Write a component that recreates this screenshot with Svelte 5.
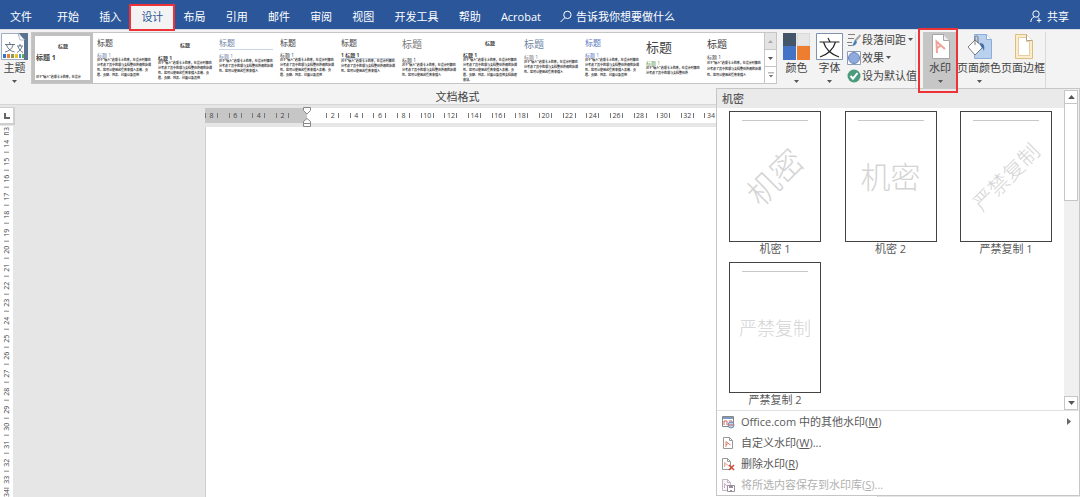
<script>
	const tabs = ['开始', '插入', '设计', '布局', '引用', '邮件', '审阅', '视图', '开发工具', '帮助', 'Acrobat'];

	let activeTab = $state('设计');
	let activeStyle = $state(0);
	let query = $state('');

	const sample =
		'对于“输入”选项卡上的库，在设计时都充分考虑了其中的项与文档整体外观的协调性。您可以使用这些库来插入表格、页眉、页脚、列表、封面以及其他文档构建基块。';

	// length: how many characters of the sample fit in the preview
	const styleSets = [
		{ title: 'small center', heading: 'large', body: 'last', prefix: '', length: 16 },
		{ title: 'medium', heading: 'slate', body: '', prefix: '', length: 68 },
		{ title: 'small center', heading: 'strong', body: '', prefix: '', length: 68 },
		{ title: 'medium slate ruled', heading: 'slate', body: '', prefix: '', length: 50 },
		{ title: 'medium', heading: '', body: '', prefix: '', length: 68 },
		{ title: 'medium', heading: 'strong ruled', body: '', prefix: '1 ', length: 50 },
		{ title: 'big gray', heading: 'low', body: '', prefix: '', length: 50 },
		{ title: 'small center', heading: 'strong', body: '', prefix: '', length: 75 },
		{ title: 'big slate', heading: 'gray', body: '', prefix: '', length: 50 },
		{ title: 'medium blue', heading: 'blue', body: '', prefix: '', length: 68 },
		{ title: 'huge', heading: 'green', body: '', prefix: '', length: 33 },
		{ title: 'big', heading: '', body: 'loose', prefix: '', length: 50 }
	];

	const watermarks = [
		{ text: '机密', label: '机密 1', kind: 'diagonal short' },
		{ text: '机密', label: '机密 2', kind: 'short' },
		{ text: '严禁复制', label: '严禁复制 1', kind: 'diagonal' },
		{ text: '严禁复制', label: '严禁复制 2', kind: '' }
	];

	const rulerLeft = [8, 6, 4, 2];
	const rulerRight = Array.from({ length: 23 }, (_, i) => (i + 1) * 2);
	const rulerRows = Array.from({ length: 20 }, (_, i) => i + 14);
</script>

{#snippet caret()}
	<svg class="caret" viewBox="0 0 5 3" aria-hidden="true"><path d="M0 0h5L2.5 3z" /></svg>
{/snippet}

<div class="app">
	<header class="tabs">
		<button class="tab file">文件</button>
		<nav>
			{#each tabs as tab}
				<button class="tab" class:active={activeTab === tab} onclick={() => (activeTab = tab)}>{tab}</button>
			{/each}
		</nav>
		<label class="tell-me">
			<svg viewBox="0 0 12 12" aria-hidden="true"><circle cx="7.4" cy="4.4" r="3.7" /><path d="M4.8 7.2L.6 11.5" /></svg>
			<input type="text" bind:value={query} placeholder="告诉我你想要做什么" aria-label="告诉我你想要做什么" />
		</label>
		<button class="share">
			<svg viewBox="0 0 12 13" aria-hidden="true"><circle cx="6" cy="4" r="3.2" /><path d="M4.2 6.8C2 7.8 1 9.5.8 12M7.6 7l1 .8M9 8v4.6M6.8 10.4h4.6" /></svg>
			共享
		</button>
	</header>

	<section class="ribbon">
		<div class="group design">
			<div class="controls">
				<button class="tool theme">
					<svg class="icon" viewBox="0 0 27 27" aria-hidden="true">
						<path fill="#fff" stroke="#9eaec0" d="M.5.5h26v26H.5z" />
						<path fill="#5b7290" d="M18 0h9v27h-4V7z" />
						<path fill="#fff" stroke="#8093ab" stroke-width=".6" d="M17 .5l7 6.500h-5z" />
						<path fill="none" stroke="#44546a" stroke-width=".8" d="M4 11.500h10M8.500 9l.7 2.500M5.500 12c1.500 4 4 6 8 7M12 12c-1 4-4 6-8 7M16 13h6M19 11v2M17 13.500c1 3 3 5 5 6M21 13.500c-1 3-3 5-5 6" />
						<path fill="#2e75d0" d="M2 21h3v4H2z" /><path fill="#ed7d31" d="M6 21h3v4H6z" />
						<path fill="#8a9a5b" d="M10 21h3v4h-3z" /><path fill="#f5bd1f" d="M14 21h3v4h-3z" />
						<path fill="#3c9bd0" d="M18 21h2v4h-2z" /><path fill="#62aa4b" d="M21 21h2v4h-2z" />
					</svg>
					<span>主题</span>
					{@render caret()}
				</button>

				<div class="gallery">
					{#each styleSets as set, i}
						<button class="style-set" class:selected={activeStyle === i} onclick={() => (activeStyle = i)}>
							<span class="set-title {set.title}">标题</span>
							<span class="set-heading {set.heading}">{set.prefix}标题 1</span>
							<span class="set-body {set.body}">{sample.slice(0, set.length)}</span>
						</button>
					{/each}
					<div class="gallery-nav">
						<button disabled aria-label="上一行"><svg class="caret" viewBox="0 0 5 3"><path d="M0 3h5L2.500 0z" /></svg></button>
						<button aria-label="下一行">{@render caret()}</button>
						<button aria-label="其他"><svg class="more" viewBox="0 0 7 6"><path d="M0 0h7v1H0zM1 3h5L3.500 6z" /></svg></button>
					</div>
				</div>

				<button class="tool">
					<svg class="icon" viewBox="0 0 27 27" aria-hidden="true">
						<path fill="#44546a" d="M0 0h13v13H0z" /><path fill="#e7e6e6" stroke="#c8c8c8" stroke-width=".6" d="M14 .3h12.700V13H14z" />
						<path fill="#4472c4" d="M0 13h13v14H0z" /><path fill="#ed7d31" d="M14 13h13v14H14z" />
					</svg>
					<span>颜色</span>
					{@render caret()}
				</button>
				<button class="tool">
					<svg class="icon" viewBox="0 0 27 27" aria-hidden="true">
						<path fill="#fff" stroke="#7f93ad" d="M.5.5h26v26H.5z" />
						<path fill="none" stroke="#262626" stroke-width="1.200" d="M3.500 9h20M12 5l2 4M7.500 9c2 7 7 12 15.500 15M19.500 9c-2 7-7 12-15.500 15" />
					</svg>
					<span>字体</span>
					{@render caret()}
				</button>

				<div class="stack">
					<button class="small">
						<svg class="glyph" viewBox="0 0 14 14" aria-hidden="true">
							<path fill="none" stroke="#808080" d="M1 1.500h7M1 5.500h6M0 9.500h5M1 12.500h4" />
							<path stroke="#a5a5a5" stroke-width="2" d="M13.500 2L8 8" /><path fill="#4a7ebb" d="M8.500 7l1.500 2c-1 3-3 4-5.500 4 2-1 1.500-4 4-6z" />
						</svg>
						段落间距{@render caret()}
					</button>
					<button class="small">
						<svg class="glyph" viewBox="0 0 14 14" aria-hidden="true">
							<path fill="#fff" stroke="#8c9db5" d="M.5.5h13v13H.5z" /><circle cx="7" cy="7" r="5.500" fill="#8faadc" stroke="#6e85bd" />
						</svg>
						效果{@render caret()}
					</button>
					<button class="small">
						<svg class="glyph" viewBox="0 0 14 14" aria-hidden="true">
							<circle cx="7" cy="7" r="6.500" fill="#4b9b7d" /><path fill="none" stroke="#fff" stroke-width="2" d="M3.500 7l2.500 2.700L10.500 4" />
						</svg>
						设为默认值
					</button>
				</div>
			</div>
			<div class="group-name">文档格式</div>
		</div>

		<div class="group background">
			<button class="tool pressed">
				<svg class="icon" viewBox="0 0 27 27" aria-hidden="true">
					<path fill="#fff" stroke="#a6a6a6" d="M5.500 1.500h11l6 6v18h-17z" /><path fill="#eee" stroke="#a6a6a6" d="M16.500 1.500v6h6" />
					<path fill="none" stroke="#eea397" stroke-width="2" d="M10 20L9.500 8.500 18 16M9.800 15.500l4-3" />
				</svg>
				<span>水印</span>
				{@render caret()}
			</button>
			<button class="tool wide">
				<svg class="icon" viewBox="0 0 27 27" aria-hidden="true">
					<path fill="#b9d1ec" stroke="#8caed4" d="M8.500 1.500h12l5 5v19h-17z" /><path fill="#fff" stroke="#8caed4" d="M20.500 1.500v5h5" />
					<path fill="#fff" stroke="#606060" stroke-width=".8" d="M9 7l8 7-8 8-7-8z" /><path fill="none" stroke="#606060" stroke-width=".8" d="M9 12V4.500c0-2 3-2 3 0V10" />
					<path fill="#3e6eae" d="M14 10c4 0 5 3 4 8-1-2-1-3-3-4z" />
				</svg>
				<span>页面颜色</span>
				{@render caret()}
			</button>
			<button class="tool wide">
				<svg class="icon" viewBox="0 0 27 27" aria-hidden="true">
					<path fill="#fbeccb" stroke="#dcbd82" d="M5.500 1.500h11l6 6v18h-17z" /><path fill="#fff" stroke="#dcbd82" stroke-width=".7" d="M8.500 4.500h8v4h3v14h-11z" />
					<path fill="#fff" stroke="#b0a58e" d="M16.500 1.500v6h6" />
				</svg>
				<span>页面边框</span>
			</button>
		</div>
	</section>

	<main class="workspace">
		<div class="side">
			<button class="tab-stop" aria-label="制表符"><svg viewBox="0 0 6 6"><path d="M1 0v5h5" /></svg></button>
			<div class="v-ruler">
				<span class="edge first">13</span>
				{#each rulerRows as n}
					<span class="mark">{n}</span>
				{/each}
				<span class="edge">34</span>
			</div>
		</div>
		<div class="document">
			<div class="h-ruler">
				{#each rulerLeft as n}
					<span class="mark margin"><b>{n}</b></span>
				{/each}
				<span class="mark origin">
					<svg viewBox="0 0 8 20" aria-hidden="true"><path d="M.5.500h7v3L4 7 .5 3.500zM.5 19.500v-5L4 11.500l3.500 3v5zM.5 16.500h7" /></svg>
				</span>
				{#each rulerRight as n}
					<span class="mark"><b>{n}</b></span>
				{/each}
			</div>
			<div class="page"></div>
		</div>
	</main>

	<div class="menu">
		<div class="scroll-area">
			<div class="content">
				<h2>机密</h2>
				<div class="watermarks">
					{#each watermarks as mark}
						<button class="watermark">
							<span class="sheet"><span class="mark-text {mark.kind}">{mark.text}</span></span>
							<span>{mark.label}</span>
						</button>
					{/each}
				</div>
			</div>
			<div class="scrollbar">
				<button aria-label="向上滚动"><svg class="caret" viewBox="0 0 5 3"><path d="M0 3h5L2.500 0z" /></svg></button>
				<div class="thumb"></div>
				<button class="down" aria-label="向下滚动">{@render caret()}</button>
			</div>
		</div>
		<div class="commands">
			<button class="command">
				<svg class="glyph" viewBox="0 0 14 14" aria-hidden="true">
					<path fill="#fff" stroke="#888" d="M1.500 1.500h11v10h-11z" /><path fill="#7b9cc0" d="M2 2h10v2H2z" />
					<path fill="none" stroke="#d7655a" d="M3 10V6h3v4M8 6h3v4" /><circle cx="10" cy="10" r="3" fill="#b9d1ec" stroke="#6f91b8" /><path fill="none" stroke="#d7655a" d="M7 10h6" />
				</svg>
				<span>Office.com 中的其他水印(<u>M</u>)</span>
				<svg class="submenu" viewBox="0 0 4 7" aria-hidden="true"><path d="M0 0l4 3.500L0 7z" /></svg>
			</button>
			<button class="command">
				<svg class="glyph" viewBox="0 0 14 14" aria-hidden="true">
					<path fill="#fff" stroke="#999" d="M2.500 1.500h6l3 3v8h-9z" /><path fill="none" stroke="#999" d="M8.500 1.500v3h3" /><path fill="none" stroke="#e2796e" d="M5 11V5.500L9.500 9M5 9l2-1.500" />
				</svg>
				<span>自定义水印(<u>W</u>)...</span>
			</button>
			<button class="command">
				<svg class="glyph" viewBox="0 0 14 14" aria-hidden="true">
					<path fill="#fff" stroke="#999" d="M1.500 1.500h5l3 3v8h-8z" /><path fill="none" stroke="#999" d="M6.500 1.500v3h3" /><path fill="none" stroke="#e9a8a0" d="M3.500 10V5.500L8 9M3.500 8.500l2-1" />
					<path stroke="#d04a35" stroke-width="1.500" d="M8 8l5 5M13 8l-5 5" />
				</svg>
				<span>删除水印(<u>R</u>)</span>
			</button>
			<button class="command" disabled>
				<svg class="glyph" viewBox="0 0 14 14" aria-hidden="true">
					<path fill="#faf5fa" stroke="#c3b5c3" d="M1.500 1.500h5l3 3v8h-8z" /><path fill="none" stroke="#c3b5c3" d="M6.500 1.500v3h3M3.500 10V5.500L7 9" />
					<path fill="#fff" stroke="#998f9d" d="M6.500 7.500h7v6h-7z" /><path fill="#998f9d" d="M8 8h4v2H8zM9 12h2v2H9z" />
				</svg>
				<span>将所选内容保存到水印库(<u>S</u>)...</span>
			</button>
		</div>
	</div>
</div>

<style>
	:global(body) {
		margin: 0;
	}

	.app {
		position: relative;
		display: flex;
		flex-direction: column;
		min-height: 100vh;
		overflow: hidden;
		background: #e6e6e6;
		color: #444;
		font-family: 'Open Sans', 'Noto Sans CJK SC', sans-serif;
		font-size: 11px;
		line-height: 14px;
	}

	.app * {
		box-sizing: border-box;
	}

	button {
		padding: 0;
		border: 0;
		background: none;
		color: inherit;
		font: inherit;
		white-space: nowrap;
	}

	svg {
		display: block;
		flex-shrink: 0;
	}

	.caret {
		width: 5px;
		height: 3px;
		fill: #555;
	}

	/* Tab bar */
	.tabs {
		display: flex;
		height: 29px;
		padding-right: 11px;
		background: #2b579a;
		color: #fff;
	}

	.tabs nav {
		display: flex;
		flex: 0 1 504px;
		justify-content: space-between;
	}

	.tab {
		position: relative;
		padding: 4px 10px 0;
	}

	.file {
		width: 47px;
		padding-right: 16px;
	}

	.tab.active {
		margin-top: 4px;
		padding-top: 0;
		background: #f3f3f3;
		color: #2b579a;
	}

	.tab.active::after,
	.tool.pressed::after {
		position: absolute;
		z-index: 3;
		inset: 0 -2px -2px;
		border: 2px solid #ee3338;
		content: '';
	}

	.tell-me {
		display: flex;
		flex: 1;
		align-items: center;
		gap: 4px;
		padding: 4px 0 0 9px;
	}

	.tell-me svg,
	.share svg {
		width: 12px;
		height: 13px;
		fill: none;
		stroke: #fff;
	}

	.tell-me input {
		width: 160px;
		padding: 0;
		border: 0;
		outline: none;
		background: none;
		color: #fff;
		font: inherit;
	}

	.tell-me input::placeholder {
		color: #fff;
		opacity: 1;
	}

	.share {
		display: flex;
		align-items: center;
		gap: 5px;
		padding-top: 4px;
	}

	/* Ribbon */
	.ribbon {
		display: flex;
		height: 76px;
		padding: 2px 34px 0 0;
		border-top: 1px solid #d5dbe6;
		border-bottom: 1px solid #d6d6d6;
		background: #f3f3f3;
	}

	.group {
		border-right: 1px solid #dadada;
	}

	.design {
		flex: 1;
		min-width: 0;
	}

	.background {
		display: flex;
		width: 130px;
		padding-left: 7px;
	}

	.controls {
		display: flex;
		height: 58px;
	}

	.group-name {
		text-align: center;
	}

	.tool {
		position: relative;
		display: flex;
		flex-direction: column;
		align-items: center;
		width: 33px;
		height: 57px;
		padding-top: 1px;
	}

	.tool .icon {
		width: 27px;
		height: 27px;
	}

	.tool span {
		margin: 1px 0 5px;
	}

	.theme {
		width: 31px;
		padding-right: 2px;
	}

	.wide {
		width: 44px;
	}

	.tool.pressed {
		width: 34px;
		background: #c6c6c6;
	}

	.tool.pressed::after {
		inset: -4px -1px -4px -5px;
	}

	.gallery {
		display: flex;
		flex: 1;
		min-width: 0;
		height: 52px;
		border: 1px solid #c6c6c6;
		background: #fff;
	}

	.style-set {
		display: flex;
		flex: 1 1 0;
		flex-direction: column;
		min-width: 0;
		padding: 4px 3px 0 4px;
		overflow: hidden;
		text-align: left;
	}

	.style-set.selected {
		padding: 3px 0 0 1px;
		border: 3px solid #c0c0c0;
	}

	.set-title {
		font-size: 8px;
		line-height: 12px;
	}

	.set-title.small {
		font-size: 5px;
		font-weight: 700;
	}

	.set-title.center {
		align-self: center;
	}

	.set-title.big {
		font-size: 10px;
		line-height: 14px;
	}

	.set-title.huge {
		font-size: 13px;
		line-height: 20px;
	}

	.set-title.ruled,
	.set-heading.ruled {
		border-bottom: 1px solid #c9d6ea;
	}

	.set-heading {
		margin-top: 3px;
		font-size: 5px;
		line-height: 6px;
		white-space: pre;
	}

	.set-heading.large {
		margin-top: 2px;
		font-size: 7px;
		font-weight: 700;
	}

	.set-heading.low {
		margin-top: 6px;
	}

	.set-heading.strong {
		font-weight: 700;
	}

	.gray {
		color: #7a7a7a;
	}

	.slate {
		color: #6f86a6;
	}

	.blue {
		color: #5b7bc0;
	}

	.green {
		color: #5f9a48;
	}

	.set-body {
		font-size: 3px;
		font-weight: 700;
		line-height: 5px;
		color: #333;
		white-space: normal;
	}

	.set-body.last {
		margin-top: 14px;
	}

	.set-body.loose {
		line-height: 6px;
	}

	.gallery-nav {
		display: flex;
		flex-direction: column;
		width: 12px;
		border-left: 1px solid #c6c6c6;
	}

	.gallery-nav button {
		display: flex;
		flex: 1;
		align-items: center;
		justify-content: center;
	}

	.gallery-nav button + button {
		border-top: 1px solid #c6c6c6;
	}

	.gallery-nav button:disabled {
		background: #e4e4e4;
	}

	.gallery-nav button:disabled .caret {
		fill: #aaa;
	}

	.more {
		width: 6px;
		height: 6px;
		fill: #777;
	}

	.gallery + .tool {
		margin-left: 3px;
	}

	.stack {
		display: flex;
		flex-direction: column;
		gap: 3px;
		width: 69px;
		padding-left: 1px;
	}

	.small {
		display: flex;
		align-items: center;
		gap: 1px;
		height: 15px;
	}

	.small .caret {
		margin-left: 1px;
	}

	.glyph {
		width: 14px;
		height: 14px;
	}

	/* Rulers and page */
	.workspace {
		display: grid;
		flex: 1;
		grid-template-columns: 15px 1fr 673px 1fr 12px;
	}

	.side {
		display: flex;
		flex-direction: column;
		padding-top: 2px;
		font-size: 7px;
		line-height: 9px;
	}

	.tab-stop {
		display: flex;
		align-items: center;
		justify-content: center;
		width: 15px;
		height: 18px;
		margin-bottom: 1px;
		border: solid #cfcfcf;
		border-width: 1px 2px 2px 0;
		background: #fff;
	}

	.tab-stop svg {
		width: 6px;
		height: 6px;
		fill: none;
		stroke: #666;
		stroke-width: 2;
	}

	.v-ruler {
		display: flex;
		flex: 1;
		flex-direction: column;
		width: 13px;
		background: #fff;
	}

	.v-ruler span {
		display: flex;
		align-items: center;
		justify-content: center;
		width: 13px;
		writing-mode: vertical-rl;
		transform: rotate(180deg);
	}

	.v-ruler .mark {
		flex: 1 1 0;
		min-height: 0;
		background: linear-gradient(#888, #888) center top / 5px 1px no-repeat;
	}

	.v-ruler .edge {
		height: 8px;
		overflow: hidden;
	}

	.v-ruler .first {
		height: 9px;
		background: linear-gradient(#888, #888) center top / 5px 1px no-repeat;
	}

	.document {
		display: flex;
		grid-column: 3;
		flex-direction: column;
		padding-top: 3px;
	}

	.h-ruler {
		display: flex;
		height: 15px;
		margin-bottom: 4px;
		padding-right: 8px;
		background: #fff;
		font-size: 7px;
		line-height: 15px;
	}

	.h-ruler .mark {
		flex: 1 1 0;
		min-width: 0;
	}

	.h-ruler b {
		display: block;
		width: 13px;
		background:
			linear-gradient(#777, #777) left center / 1px 5px no-repeat,
			linear-gradient(#777, #777) right center / 1px 5px no-repeat;
		font-weight: 400;
		text-align: center;
	}

	.h-ruler .margin {
		background: #c6c6c6;
	}

	.h-ruler .origin {
		padding-left: 3px;
		background: linear-gradient(90deg, #c6c6c6 7px, #fff 7px);
	}

	.h-ruler .origin svg {
		width: 8px;
		height: 20px;
		margin-top: -1px;
		fill: #fff;
		stroke: #888;
	}

	.page {
		flex: 1;
		border: 1px solid #cfcfcf;
		border-width: 0 1px;
		background: #fff;
	}

	/* Watermark drop-down */
	.menu {
		position: absolute;
		z-index: 2;
		top: 88px;
		right: 0;
		width: 364px;
		border: 1px solid #c6c6c6;
		background: #fff;
		color: #595959;
	}

	.scroll-area {
		display: flex;
	}

	.content {
		flex: 1;
	}

	h2 {
		margin: 0;
		padding: 0 5px;
		background: #eaeaea;
		font-size: 11px;
		font-weight: 500;
		line-height: 19px;
	}

	.watermarks {
		display: grid;
		grid-template-columns: repeat(3, 92px);
		justify-content: space-between;
		gap: 6px;
		padding: 3px 12px;
	}

	.watermark {
		display: flex;
		flex-direction: column;
		align-items: center;
	}

	.sheet {
		display: flex;
		align-items: center;
		justify-content: center;
		width: 92px;
		height: 131px;
		border: 1px solid #444;
		background: linear-gradient(#c8c8c8, #c8c8c8) center 8px / 66px 1px no-repeat;
	}

	.mark-text {
		color: #d4d4d4;
		font-size: 18px;
		font-weight: 300;
		line-height: 30px;
	}

	.mark-text.short {
		font-size: 30px;
	}

	.mark-text.diagonal {
		font-size: 21px;
		transform: rotate(-45deg);
	}

	.mark-text.diagonal.short {
		font-size: 32px;
	}

	.scrollbar {
		display: flex;
		flex-direction: column;
		width: 15px;
		padding: 1px 1px 0 0;
		background: #f0f0f0;
	}

	.scrollbar button {
		display: flex;
		align-items: center;
		justify-content: center;
		height: 14px;
		border: 1px solid #c6c6c6;
		background: #fff;
	}

	.scrollbar .caret {
		width: 7px;
		height: 4px;
	}

	.thumb {
		height: 97px;
		border: 1px solid #c6c6c6;
		border-top: 0;
		background: #fff;
	}

	.scrollbar .down {
		margin-top: auto;
	}

	.commands {
		display: flex;
		flex-direction: column;
		border-top: 1px solid #e1e1e1;
	}

	.command {
		display: flex;
		align-items: center;
		gap: 6px;
		height: 21px;
		padding: 0 8px 0 4px;
	}

	.command:disabled {
		color: #b0b0b0;
	}

	.submenu {
		width: 4px;
		height: 7px;
		margin-left: auto;
		fill: #666;
	}
</style>
